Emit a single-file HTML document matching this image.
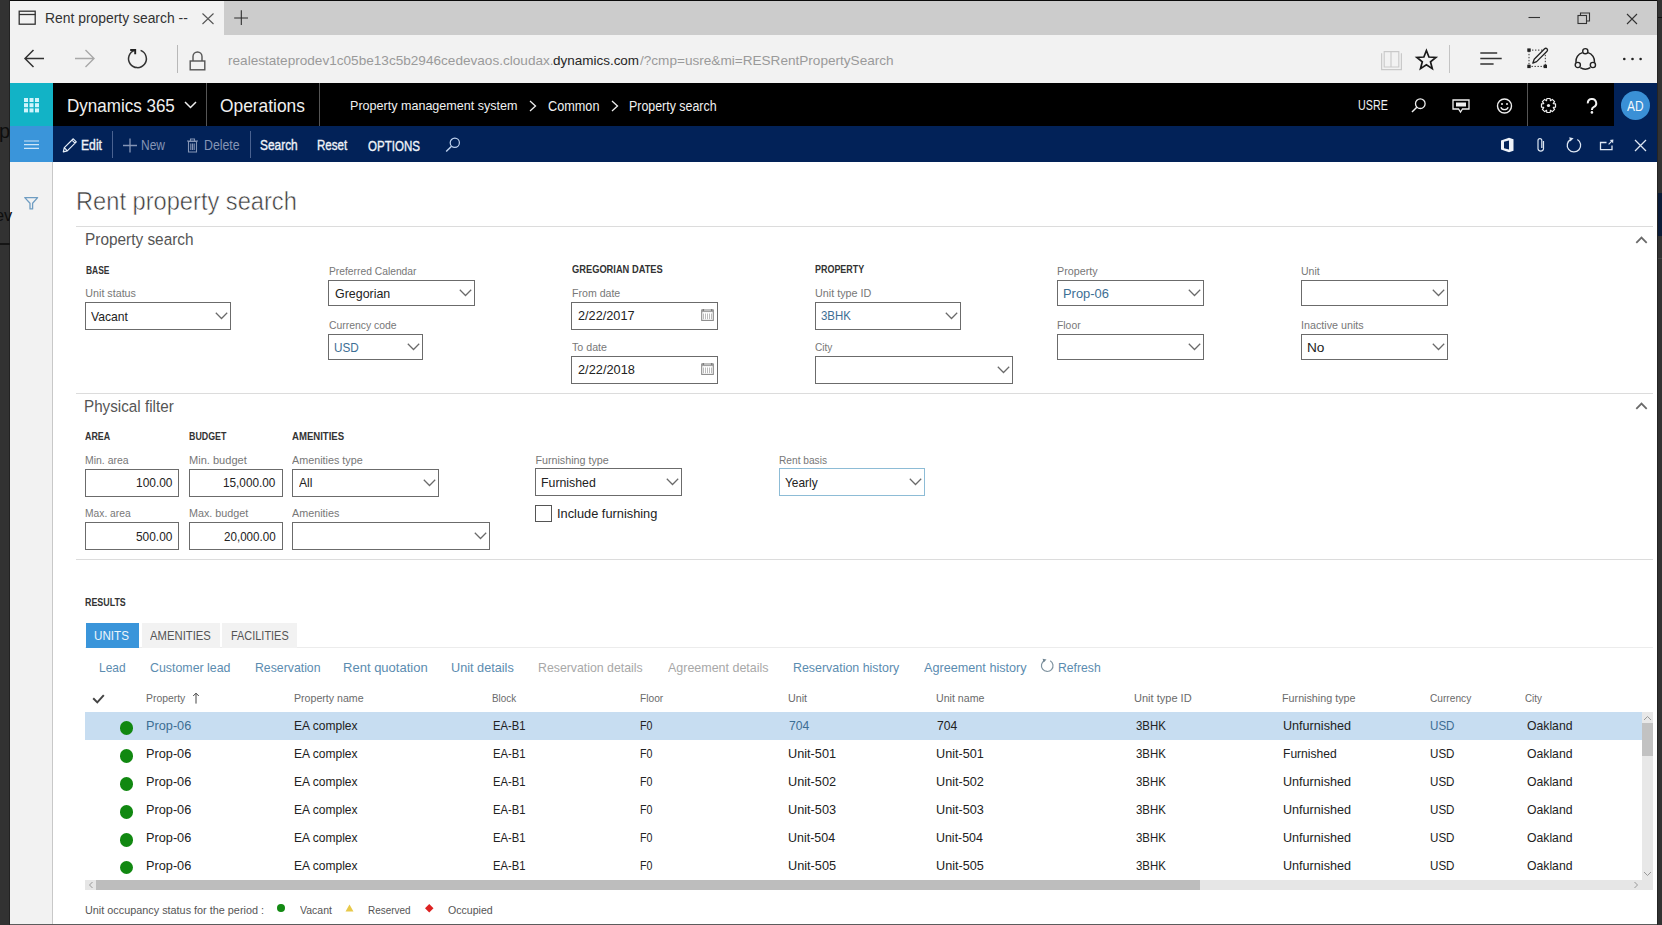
<!DOCTYPE html>
<html><head><meta charset="utf-8"><style>
html,body{margin:0;padding:0;width:1662px;height:925px;overflow:hidden;background:#fff;position:relative;font-family:'Liberation Sans', sans-serif;}
.t{position:absolute;white-space:nowrap;line-height:1;font-family:'Liberation Sans', sans-serif;}
svg{position:absolute;overflow:visible}
</style></head><body>
<div style="position:absolute;left:0px;top:0px;width:1662px;height:925px;background:#323232"></div>
<div style="position:absolute;left:9px;top:0px;width:1px;height:925px;background:#222"></div>
<div style="position:absolute;left:1657px;top:0px;width:1px;height:925px;background:#242424"></div>
<div style="position:absolute;left:10px;top:0px;width:1647px;height:1px;background:#0a0a0a"></div>
<div style="position:absolute;left:1658px;top:17px;width:4px;height:1px;background:#111"></div>
<div style="position:absolute;left:10px;top:1px;width:1647px;height:34px;background:#cccccc"></div>
<div style="position:absolute;left:10px;top:1px;width:214px;height:34px;background:#f2f2f2"></div>
<div style="position:absolute;left:10px;top:35px;width:1647px;height:48px;background:#f2f2f2"></div>
<div style="position:absolute;left:10px;top:83px;width:1647px;height:43px;background:#000"></div>
<div style="position:absolute;left:10px;top:83px;width:43px;height:43px;background:#12b3c6"></div>
<div style="position:absolute;left:1614px;top:83px;width:43px;height:43px;background:#022258"></div>
<div style="position:absolute;left:10px;top:126px;width:1647px;height:36px;background:#022258"></div>
<div style="position:absolute;left:10px;top:126px;width:43px;height:36px;background:#3a95da"></div>
<div style="position:absolute;left:10px;top:162px;width:1647px;height:762px;background:#fff"></div>
<div style="position:absolute;left:10px;top:924px;width:1647px;height:1px;background:#5c5c5c"></div>
<div style="position:absolute;left:10px;top:162px;width:42px;height:762px;background:#f2f2f2"></div>
<div style="position:absolute;left:52px;top:162px;width:1px;height:762px;background:#c8c8c8"></div>
<div style="position:absolute;left:0px;top:243px;width:10px;height:2px;background:#151515"></div>
<div style="position:absolute;left:1658px;top:193px;width:4px;height:43px;background:#0b1c38"></div>
<div style="position:absolute;left:1658px;top:258px;width:4px;height:1px;background:#444"></div>
<svg style="left:18px;top:10px" width="19" height="16" viewBox="0 0 19 16"><rect x="1.2" y="1.2" width="16" height="13" fill="none" stroke="#333" stroke-width="1.3"/><line x1="1" y1="4.5" x2="17.5" y2="4.5" fill="none" stroke="#333" stroke-width="1.3"/></svg>
<svg style="left:201px;top:12px" width="14" height="13" viewBox="0 0 14 13"><path d="M1.5 1.5L12.5 12M12.5 1.5L1.5 12" fill="none" stroke="#555" stroke-width="1.1"/></svg>
<svg style="left:233px;top:9px" width="16" height="17" viewBox="0 0 16 17"><path d="M8.3 1.2V16M1.2 9H15" fill="none" stroke="#2a2a2a" stroke-width="1.05"/></svg>
<svg style="left:23px;top:48px" width="22" height="21" viewBox="0 0 22 21"><path d="M21 10.5H2M10.5 2L2 10.5L10.5 19" fill="none" stroke="#333" stroke-width="1.5"/></svg>
<svg style="left:74px;top:48px" width="22" height="21" viewBox="0 0 22 21"><path d="M1 10.5H20M11.5 2L20 10.5L11.5 19" fill="none" stroke="#a8a8a8" stroke-width="1.4"/></svg>
<svg style="left:126px;top:47px" width="24" height="24" viewBox="0 0 24 24"><path d="M14.6 3.4A8.9 8.9 0 1 1 8.9 3.2" fill="none" stroke="#333" stroke-width="1.5"/><path d="M4.2 3H9.2V7.2" fill="none" stroke="#222" stroke-width="1.9"/></svg>
<div style="position:absolute;left:177px;top:45px;width:1px;height:28px;background:#b8b8b8"></div>
<svg style="left:189px;top:49px" width="17" height="22" viewBox="0 0 17 22"><path d="M4 12V7.5A4.5 4.5 0 0 1 13 7.5V12" fill="none" stroke="#555" stroke-width="1.4"/><rect x="1.2" y="12" width="14.6" height="8.8" fill="none" stroke="#555" stroke-width="1.4"/></svg>
<svg style="left:1528px;top:16px" width="13" height="3" viewBox="0 0 13 3"><line x1="0.5" y1="1.5" x2="12" y2="1.5" stroke="#333" stroke-width="1.1"/></svg>
<svg style="left:1577px;top:12px" width="14" height="12" viewBox="0 0 14 12"><rect x="1" y="3.5" width="8.5" height="8" fill="none" stroke="#333" stroke-width="1.1"/><path d="M3.5 3.5V1H12.5V9H9.5" fill="none" stroke="#333" stroke-width="1.1"/></svg>
<svg style="left:1626px;top:13px" width="12" height="12" viewBox="0 0 12 12"><path d="M1 1L11 11M11 1L1 11" fill="none" stroke="#333" stroke-width="1.1"/></svg>
<svg style="left:1380px;top:50px" width="23" height="21" viewBox="0 0 23 21"><path d="M1.6 3.2V19.6H21.4V3.2" fill="none" stroke="#c9c9c9" stroke-width="1.2"/><path d="M4.2 1.6H11V17H4.2ZM11 1.6H18.8V17H11Z" fill="none" stroke="#c9c9c9" stroke-width="1.1"/></svg>
<svg style="left:1414.5px;top:48px" width="23" height="23" viewBox="0 0 23 23"><path d="M11.40 2.50 L13.93 9.02 L20.91 9.41 L15.49 13.83 L17.28 20.59 L11.40 16.80 L5.52 20.59 L7.31 13.83 L1.89 9.41 L8.87 9.02Z" fill="none" stroke="#1a1a1a" stroke-width="1.7" stroke-linejoin="miter" stroke-miterlimit="3"/></svg>
<div style="position:absolute;left:1449px;top:45px;width:1px;height:28px;background:#c4c4c4"></div>
<svg style="left:1479px;top:51px" width="24" height="15" viewBox="0 0 24 15"><path d="M1.3 2H18.2M1.3 7.5H22.7M1.3 12.9H14.6" stroke="#333" stroke-width="1.5"/></svg>
<svg style="left:1526px;top:47px" width="23" height="23" viewBox="0 0 23 23"><path d="M3 3.1H19.3V19.4H3Z" fill="none" stroke="#333" stroke-width="1" stroke-dasharray="1.4 1.6"/><rect x="1.3" y="1.4" width="3.4" height="3.4" fill="#222"/><rect x="1.3" y="17.7" width="3.4" height="3.4" fill="#222"/><rect x="17.6" y="17.7" width="3.4" height="3.4" fill="#222"/><path d="M6.8 16.2L8.2 12.2L18.6 1.8A1.4 1.4 0 0 1 21 4.2L10.6 14.6Z" fill="#f2f2f2" stroke="#222" stroke-width="1.3" stroke-linejoin="round"/></svg>
<svg style="left:1573px;top:47px" width="24" height="23" viewBox="0 0 24 23"><path d="M9.4 5.6A9.4 9.4 0 0 0 2.9 15.6M7.3 20.6A9.4 9.4 0 0 0 17.3 20.6M21.5 15.6A9.4 9.4 0 0 0 15 5.6" fill="none" stroke="#222" stroke-width="1.5"/><circle cx="12.3" cy="4.2" r="2.6" fill="#f2f2f2" stroke="#222" stroke-width="1.4"/><circle cx="4.8" cy="18" r="2.6" fill="#f2f2f2" stroke="#222" stroke-width="1.4"/><circle cx="19.9" cy="18" r="2.6" fill="#f2f2f2" stroke="#222" stroke-width="1.4"/></svg>
<svg style="left:1621px;top:57px" width="23" height="4" viewBox="0 0 23 4"><circle cx="3.3" cy="2" r="1.3" fill="#222"/><circle cx="11.5" cy="2" r="1.3" fill="#222"/><circle cx="19.6" cy="2" r="1.3" fill="#222"/></svg>
<svg style="left:24px;top:98px" width="16" height="15" viewBox="0 0 16 15"><rect x="0.0" y="0.0" width="4" height="4" fill="#d0f4fb"/><rect x="5.5" y="0.0" width="4" height="4" fill="#d0f4fb"/><rect x="11.0" y="0.0" width="4" height="4" fill="#d0f4fb"/><rect x="0.0" y="5.2" width="4" height="4" fill="#d0f4fb"/><rect x="5.5" y="5.2" width="4" height="4" fill="#d0f4fb"/><rect x="11.0" y="5.2" width="4" height="4" fill="#d0f4fb"/><rect x="0.0" y="10.4" width="4" height="4" fill="#d0f4fb"/><rect x="5.5" y="10.4" width="4" height="4" fill="#d0f4fb"/><rect x="11.0" y="10.4" width="4" height="4" fill="#d0f4fb"/></svg>
<svg style="left:184px;top:101px" width="13" height="8" viewBox="0 0 13 8"><path d="M1 1L6.5 6.5L12 1" fill="none" stroke="#eee" stroke-width="1.5"/></svg>
<div style="position:absolute;left:206px;top:83px;width:1px;height:43px;background:#555"></div>
<div style="position:absolute;left:319px;top:83px;width:1px;height:43px;background:#555"></div>
<svg style="left:529px;top:100px" width="8" height="12" viewBox="0 0 8 12"><path d="M1 1L6.5 6L1 11" fill="none" stroke="#eee" stroke-width="1.3"/></svg>
<svg style="left:611px;top:100px" width="8" height="12" viewBox="0 0 8 12"><path d="M1 1L6.5 6L1 11" fill="none" stroke="#eee" stroke-width="1.3"/></svg>
<svg style="left:1411px;top:98px" width="15" height="15" viewBox="0 0 15 15"><circle cx="9.3" cy="5.7" r="4.8" fill="none" stroke="#eee" stroke-width="1.3"/><path d="M5.8 9.2L1 14" stroke="#eee" stroke-width="1.5"/></svg>
<svg style="left:1452px;top:99px" width="18" height="14" viewBox="0 0 18 14"><path d="M1 1H17V10H10.5L8.5 13L6.5 10H1Z" fill="none" stroke="#eee" stroke-width="1.3"/><rect x="4" y="3.5" width="10" height="4" fill="#eee"/></svg>
<svg style="left:1496px;top:98px" width="17" height="16" viewBox="0 0 17 16"><circle cx="8.5" cy="8" r="7" fill="none" stroke="#eee" stroke-width="1.4"/><circle cx="6" cy="6" r="1" fill="#eee"/><circle cx="11" cy="6" r="1" fill="#eee"/><path d="M4.8 9.2A4 4 0 0 0 12.2 9.2" fill="none" stroke="#eee" stroke-width="1.3"/></svg>
<div style="position:absolute;left:1527px;top:83px;width:1px;height:43px;background:#555"></div>
<svg style="left:1541px;top:98px" width="15" height="15" viewBox="0 0 15 15"><path d="M14.52 5.88 L14.52 9.12 L12.32 9.45 L12.29 9.53 L13.61 11.32 L11.32 13.61 L9.53 12.29 L9.45 12.32 L9.12 14.52 L5.88 14.52 L5.55 12.32 L5.47 12.29 L3.68 13.61 L1.39 11.32 L2.71 9.53 L2.68 9.45 L0.48 9.12 L0.48 5.88 L2.68 5.55 L2.71 5.47 L1.39 3.68 L3.68 1.39 L5.47 2.71 L5.55 2.68 L5.88 0.48 L9.12 0.48 L9.45 2.68 L9.53 2.71 L11.32 1.39 L13.61 3.68 L12.29 5.47 L12.32 5.55Z" fill="none" stroke="#eee" stroke-width="1.2" stroke-linejoin="round"/><circle cx="7.5" cy="7.5" r="1.6" fill="#eee"/></svg>
<svg style="left:1586px;top:99px" width="12" height="15" viewBox="0 0 12 15"><path d="M1.8 4.4A4.2 4.2 0 1 1 7.6 8.1C6.2 8.9 5.9 9.6 5.9 11" fill="none" stroke="#f2f2f2" stroke-width="2"/><circle cx="5.9" cy="13.4" r="1.3" fill="#f2f2f2"/></svg>
<div style="position:absolute;left:1621px;top:90.5px;width:29px;height:29px;background:#3a90d6;border-radius:50%"></div>
<svg style="left:24px;top:140px" width="16" height="10" viewBox="0 0 16 10"><path d="M0 1H15M0 4.7H15M0 8.4H15" stroke="#cfe6f8" stroke-width="1.2"/></svg>
<svg style="left:62px;top:138px" width="16" height="15" viewBox="0 0 16 15"><path d="M1.3 13.8L2.3 9.6L11.3 0.8L14.3 3.8L5.3 12.8Z M10 2.2L13 5.2 M2.3 9.6L5.3 12.8" fill="none" stroke="#e6eef8" stroke-width="1.2" stroke-linejoin="round"/></svg>
<div style="position:absolute;left:112px;top:131px;width:1px;height:27px;background:#4a6290"></div>
<svg style="left:123px;top:138px" width="14" height="15" viewBox="0 0 14 15"><path d="M7 0.5V14.5M0 7.5H14" stroke="#8595b5" stroke-width="1.3"/></svg>
<svg style="left:187px;top:138px" width="11" height="15" viewBox="0 0 11 15"><path d="M1.5 3.5H9.5V14H1.5Z M0 3H11 M3.5 3V1H7.5V3 M3.8 5.5V12 M5.5 5.5V12 M7.2 5.5V12" fill="none" stroke="#8595b5" stroke-width="1.1"/></svg>
<div style="position:absolute;left:250px;top:131px;width:1px;height:27px;background:#4a6290"></div>
<svg style="left:445px;top:137px" width="16" height="16" viewBox="0 0 16 16"><circle cx="9.8" cy="5.8" r="4.6" fill="none" stroke="#bfd2ee" stroke-width="1.2"/><path d="M6.5 9.2L1.2 14.6" stroke="#bfd2ee" stroke-width="1.4"/></svg>
<svg style="left:1500px;top:137px" width="15" height="16" viewBox="0 0 15 16"><path d="M1 3.5L9 0.8L13.5 2.2V13.8L9 15.2L1 12.5ZM9 0.8V15.2L1 12.5" fill="#eef2f8"/><path d="M4 4.8L9 3.5V12.5L4 11.3Z" fill="#022258"/></svg>
<svg style="left:1536px;top:137px" width="10" height="16" viewBox="0 0 10 16"><path d="M7.5 4V11.8A2.8 2.8 0 0 1 2 11.8V3.6A1.9 1.9 0 0 1 5.8 3.6V11" fill="none" stroke="#dde6f2" stroke-width="1.2"/></svg>
<svg style="left:1566px;top:136px" width="16" height="17" viewBox="0 0 16 17"><path d="M11.35 3.5A6.7 6.7 0 1 1 4.9 3.3" fill="none" stroke="#dde6f2" stroke-width="1.3"/><path d="M3.2 1.2L7.6 2.2L4.3 5.6Z" fill="#dde6f2"/></svg>
<svg style="left:1599px;top:139px" width="16" height="12" viewBox="0 0 16 12"><path d="M7.5 3.5H1.5V10.7H13V6.5" fill="none" stroke="#dde6f2" stroke-width="1.3"/><path d="M9.6 5.4L12.8 2.2" stroke="#dde6f2" stroke-width="1.2"/><path d="M10.8 0.9L14.4 0.6L14.1 4.2Z" fill="#dde6f2"/></svg>
<svg style="left:1634px;top:139px" width="13" height="13" viewBox="0 0 13 13"><path d="M1 1L12 12M12 1L1 12" fill="none" stroke="#dde6f2" stroke-width="1.3"/></svg>
<svg style="left:23px;top:196px" width="17" height="15" viewBox="0 0 17 15"><path d="M1.8 1.6H14.6L9.6 7.3V12.9H7V7.3Z" fill="none" stroke="#6f9dc2" stroke-width="1.3" stroke-linejoin="round"/></svg>
<div style="position:absolute;left:76px;top:226px;width:1577px;height:1px;background:#dcdcdc"></div>
<div style="position:absolute;left:76px;top:393px;width:1577px;height:1px;background:#dcdcdc"></div>
<div style="position:absolute;left:76px;top:559px;width:1577px;height:1px;background:#dcdcdc"></div>
<svg style="left:1634.5px;top:236px" width="13" height="9" viewBox="0 0 13 9"><path d="M1.3 6.8L6.5 1.6L11.7 6.8" fill="none" stroke="#6a6a6a" stroke-width="1.8"/></svg>
<svg style="left:1634.5px;top:402px" width="13" height="9" viewBox="0 0 13 9"><path d="M1.3 6.8L6.5 1.6L11.7 6.8" fill="none" stroke="#6a6a6a" stroke-width="1.8"/></svg>
<div style="position:absolute;left:85px;top:302px;width:146px;height:27.6px;box-sizing:border-box;border:1px solid #6b6b6b;background:#fff"></div>
<svg style="left:214.5px;top:312.0px" width="13" height="8" viewBox="0 0 13 8"><path d="M0.8 0.8L6.5 6.5L12.2 0.8" fill="none" stroke="#6a6a6a" stroke-width="1.25"/></svg>
<div style="position:absolute;left:328px;top:280px;width:147px;height:26px;box-sizing:border-box;border:1px solid #6b6b6b;background:#fff"></div>
<svg style="left:458.5px;top:289.2px" width="13" height="8" viewBox="0 0 13 8"><path d="M0.8 0.8L6.5 6.5L12.2 0.8" fill="none" stroke="#6a6a6a" stroke-width="1.25"/></svg>
<div style="position:absolute;left:328px;top:334px;width:95px;height:26px;box-sizing:border-box;border:1px solid #6b6b6b;background:#fff"></div>
<svg style="left:406.5px;top:343.2px" width="13" height="8" viewBox="0 0 13 8"><path d="M0.8 0.8L6.5 6.5L12.2 0.8" fill="none" stroke="#6a6a6a" stroke-width="1.25"/></svg>
<div style="position:absolute;left:571px;top:302px;width:147px;height:27.6px;box-sizing:border-box;border:1px solid #6b6b6b;background:#fff"></div>
<div style="position:absolute;left:571px;top:356px;width:147px;height:27.6px;box-sizing:border-box;border:1px solid #6b6b6b;background:#fff"></div>
<svg style="left:701px;top:309px" width="14" height="13" viewBox="0 0 14 13"><rect x="0.7" y="1" width="11.6" height="10.4" fill="none" stroke="#8a8a8a" stroke-width="1.1"/><path d="M0.7 2.6H12.3" stroke="#999" stroke-width="1"/><circle cx="2.3" cy="1" r="0.9" fill="#777"/><circle cx="10.7" cy="1" r="0.9" fill="#777"/><path d="M2.5 4.5V10.2M4.5 4.5V10.2M6.5 4.5V10.2M8.5 4.5V10.2M10.5 4.5V10.2" stroke="#aaa" stroke-width="0.8"/></svg>
<svg style="left:701px;top:363px" width="14" height="13" viewBox="0 0 14 13"><rect x="0.7" y="1" width="11.6" height="10.4" fill="none" stroke="#8a8a8a" stroke-width="1.1"/><path d="M0.7 2.6H12.3" stroke="#999" stroke-width="1"/><circle cx="2.3" cy="1" r="0.9" fill="#777"/><circle cx="10.7" cy="1" r="0.9" fill="#777"/><path d="M2.5 4.5V10.2M4.5 4.5V10.2M6.5 4.5V10.2M8.5 4.5V10.2M10.5 4.5V10.2" stroke="#aaa" stroke-width="0.8"/></svg>
<div style="position:absolute;left:815px;top:302px;width:146px;height:27.6px;box-sizing:border-box;border:1px solid #6b6b6b;background:#fff"></div>
<svg style="left:944.5px;top:312.0px" width="13" height="8" viewBox="0 0 13 8"><path d="M0.8 0.8L6.5 6.5L12.2 0.8" fill="none" stroke="#6a6a6a" stroke-width="1.25"/></svg>
<div style="position:absolute;left:815px;top:356px;width:198px;height:27.6px;box-sizing:border-box;border:1px solid #6b6b6b;background:#fff"></div>
<svg style="left:996.5px;top:366.0px" width="13" height="8" viewBox="0 0 13 8"><path d="M0.8 0.8L6.5 6.5L12.2 0.8" fill="none" stroke="#6a6a6a" stroke-width="1.25"/></svg>
<div style="position:absolute;left:1057px;top:280px;width:147px;height:26px;box-sizing:border-box;border:1px solid #6b6b6b;background:#fff"></div>
<svg style="left:1187.5px;top:289.2px" width="13" height="8" viewBox="0 0 13 8"><path d="M0.8 0.8L6.5 6.5L12.2 0.8" fill="none" stroke="#6a6a6a" stroke-width="1.25"/></svg>
<div style="position:absolute;left:1057px;top:334px;width:147px;height:26px;box-sizing:border-box;border:1px solid #6b6b6b;background:#fff"></div>
<svg style="left:1187.5px;top:343.2px" width="13" height="8" viewBox="0 0 13 8"><path d="M0.8 0.8L6.5 6.5L12.2 0.8" fill="none" stroke="#6a6a6a" stroke-width="1.25"/></svg>
<div style="position:absolute;left:1301px;top:280px;width:147px;height:26px;box-sizing:border-box;border:1px solid #6b6b6b;background:#fff"></div>
<svg style="left:1431.5px;top:289.2px" width="13" height="8" viewBox="0 0 13 8"><path d="M0.8 0.8L6.5 6.5L12.2 0.8" fill="none" stroke="#6a6a6a" stroke-width="1.25"/></svg>
<div style="position:absolute;left:1301px;top:334px;width:147px;height:26px;box-sizing:border-box;border:1px solid #6b6b6b;background:#fff"></div>
<svg style="left:1431.5px;top:343.2px" width="13" height="8" viewBox="0 0 13 8"><path d="M0.8 0.8L6.5 6.5L12.2 0.8" fill="none" stroke="#6a6a6a" stroke-width="1.25"/></svg>
<div style="position:absolute;left:85px;top:469px;width:94px;height:27.6px;box-sizing:border-box;border:1px solid #6b6b6b;background:#fff"></div>
<div style="position:absolute;left:189px;top:469px;width:94px;height:27.6px;box-sizing:border-box;border:1px solid #6b6b6b;background:#fff"></div>
<div style="position:absolute;left:292px;top:469px;width:147px;height:27.6px;box-sizing:border-box;border:1px solid #6b6b6b;background:#fff"></div>
<svg style="left:422.5px;top:479.0px" width="13" height="8" viewBox="0 0 13 8"><path d="M0.8 0.8L6.5 6.5L12.2 0.8" fill="none" stroke="#6a6a6a" stroke-width="1.25"/></svg>
<div style="position:absolute;left:85px;top:522px;width:94px;height:27.6px;box-sizing:border-box;border:1px solid #6b6b6b;background:#fff"></div>
<div style="position:absolute;left:189px;top:522px;width:94px;height:27.6px;box-sizing:border-box;border:1px solid #6b6b6b;background:#fff"></div>
<div style="position:absolute;left:292px;top:522px;width:198px;height:27.6px;box-sizing:border-box;border:1px solid #6b6b6b;background:#fff"></div>
<svg style="left:473.5px;top:532.0px" width="13" height="8" viewBox="0 0 13 8"><path d="M0.8 0.8L6.5 6.5L12.2 0.8" fill="none" stroke="#6a6a6a" stroke-width="1.25"/></svg>
<div style="position:absolute;left:535px;top:468px;width:147px;height:28px;box-sizing:border-box;border:1px solid #6b6b6b;background:#fff"></div>
<svg style="left:665.5px;top:478.2px" width="13" height="8" viewBox="0 0 13 8"><path d="M0.8 0.8L6.5 6.5L12.2 0.8" fill="none" stroke="#6a6a6a" stroke-width="1.25"/></svg>
<div style="position:absolute;left:535px;top:505px;width:17px;height:17px;box-sizing:border-box;border:1px solid #555;background:#fff"></div>
<div style="position:absolute;left:779px;top:468px;width:146px;height:28px;box-sizing:border-box;border:1px solid #8dbcd6;background:#fff"></div>
<svg style="left:908.5px;top:478.2px" width="13" height="8" viewBox="0 0 13 8"><path d="M0.8 0.8L6.5 6.5L12.2 0.8" fill="none" stroke="#6a6a6a" stroke-width="1.25"/></svg>
<div style="position:absolute;left:85px;top:647px;width:1568px;height:1px;background:#ececec"></div>
<div style="position:absolute;left:85.5px;top:622.5px;width:53.3px;height:25.5px;background:#3a95da"></div>
<div style="position:absolute;left:141.8px;top:622.5px;width:78px;height:25.5px;background:#f2f2f2"></div>
<div style="position:absolute;left:222.3px;top:622.5px;width:75px;height:25.5px;background:#f2f2f2"></div>
<svg style="left:1040px;top:658px" width="15" height="16" viewBox="0 0 15 16"><path d="M10.2 2.7A5.8 5.8 0 1 1 4.6 2.5" fill="none" stroke="#7e929f" stroke-width="1.2"/><path d="M2.6 0.8L6.5 1.6L3.6 4.6Z" fill="#6f8592"/></svg>
<svg style="left:92px;top:694px" width="14" height="11" viewBox="0 0 14 11"><path d="M1.2 4.2L5.3 8.4L11.8 1.2" fill="none" stroke="#444" stroke-width="2"/></svg>
<svg style="left:192px;top:692px" width="8" height="13" viewBox="0 0 8 13"><path d="M4 11.6V1.2M1.2 4L4 1.2L6.8 4" fill="none" stroke="#444" stroke-width="1"/></svg>
<div style="position:absolute;left:85px;top:712px;width:1557px;height:28px;background:#c7ddf1"></div>
<div style="position:absolute;left:119.6px;top:721.20px;width:13.5px;height:13.5px;border-radius:50%;background:#118811"></div>
<div style="position:absolute;left:119.6px;top:749.15px;width:13.5px;height:13.5px;border-radius:50%;background:#118811"></div>
<div style="position:absolute;left:119.6px;top:777.10px;width:13.5px;height:13.5px;border-radius:50%;background:#118811"></div>
<div style="position:absolute;left:119.6px;top:805.05px;width:13.5px;height:13.5px;border-radius:50%;background:#118811"></div>
<div style="position:absolute;left:119.6px;top:833.00px;width:13.5px;height:13.5px;border-radius:50%;background:#118811"></div>
<div style="position:absolute;left:119.6px;top:860.95px;width:13.5px;height:13.5px;border-radius:50%;background:#118811"></div>
<div style="position:absolute;left:1641.6px;top:712px;width:11.2px;height:168px;background:#e8e8e8"></div>
<div style="position:absolute;left:1642px;top:723px;width:10.5px;height:33px;background:#c2c2c2"></div>
<svg style="left:1643px;top:715px" width="9" height="6" viewBox="0 0 9 6"><path d="M1 5L4.5 1.5L8 5" fill="none" stroke="#999" stroke-width="1"/></svg>
<svg style="left:1643px;top:871px" width="9" height="6" viewBox="0 0 9 6"><path d="M1 1L4.5 4.5L8 1" fill="none" stroke="#999" stroke-width="1"/></svg>
<div style="position:absolute;left:85px;top:880px;width:1568px;height:10px;background:#e6e6e6"></div>
<div style="position:absolute;left:96px;top:880px;width:1104px;height:10px;background:#bdbdbd"></div>
<svg style="left:88px;top:881px" width="6" height="8" viewBox="0 0 6 8"><path d="M4.5 1L1.5 4L4.5 7" fill="none" stroke="#999" stroke-width="1"/></svg>
<svg style="left:1633px;top:881px" width="6" height="8" viewBox="0 0 6 8"><path d="M1.5 1L4.5 4L1.5 7" fill="none" stroke="#999" stroke-width="1"/></svg>
<div style="position:absolute;left:277.2px;top:904.2px;width:7.8px;height:7.8px;border-radius:50%;background:#138a13"></div>
<svg style="left:345px;top:904px" width="9" height="8" viewBox="0 0 9 8"><path d="M4.5 0.5L8.5 7.5H0.5Z" fill="#e8c94a"/></svg>
<svg style="left:425px;top:904px" width="8.5" height="8.5" viewBox="0 0 8.5 8.5"><path d="M4.25 0L8.5 4.25L4.25 8.5L0 4.25Z" fill="#d22"/></svg>
<div id="t0" class="t" style="left:-1.00px;top:120.60px;font-size:20.00px;color:#0e0e0e;">p</div>
<div id="t1" class="t" style="left:-5.00px;top:206.78px;font-size:16.38px;color:#0e0e0e;">ev</div>
<div id="t2" class="t" style="left:44.99px;top:12.00px;font-size:13.77px;color:#333;transform:scaleX(1.0086);transform-origin:0 0;">Rent property search --</div>
<div id="t3" class="t" style="left:227.50px;top:53.69px;font-size:13.19px;color:#9a9a9a;transform:scaleX(1.0303);transform-origin:0 0;">realestateprodev1c05be13c5b2946cedevaos.cloudax.</div>
<div id="t4" class="t" style="left:553.00px;top:53.69px;font-size:13.19px;color:#262626;transform:scaleX(1.0213);transform-origin:0 0;">dynamics.com</div>
<div id="t5" class="t" style="left:640.00px;top:53.69px;font-size:13.19px;color:#9a9a9a;transform:scaleX(1.0299);transform-origin:0 0;">/?cmp=usre&amp;mi=RESRentPropertySearch</div>
<div id="t6" class="t" style="left:66.60px;top:96.59px;font-size:18.84px;color:#f0f0f0;transform:scaleX(0.9039);transform-origin:0 0;">Dynamics 365</div>
<div id="t7" class="t" style="left:220.00px;top:96.59px;font-size:18.84px;color:#f0f0f0;transform:scaleX(0.9216);transform-origin:0 0;">Operations</div>
<div id="t8" class="t" style="left:349.67px;top:98.84px;font-size:13.48px;color:#f0f0f0;transform:scaleX(0.9325);transform-origin:0 0;">Property management system</div>
<div id="t9" class="t" style="left:548.00px;top:98.75px;font-size:14.06px;color:#f0f0f0;transform:scaleX(0.9026);transform-origin:0 0;">Common</div>
<div id="t10" class="t" style="left:629.12px;top:98.75px;font-size:14.06px;color:#f0f0f0;transform:scaleX(0.8835);transform-origin:0 0;">Property search</div>
<div id="t11" class="t" style="left:1357.83px;top:99.07px;font-size:13.91px;color:#f0f0f0;transform:scaleX(0.7709);transform-origin:0 0;">USRE</div>
<div id="t12" class="t" style="left:1627.10px;top:99.67px;font-size:13.91px;color:#f4f8fc;transform:scaleX(0.8560);transform-origin:0 0;">AD</div>
<div id="t13" class="t" style="left:80.83px;top:137.75px;font-size:14.06px;color:#eef2f8;transform:scaleX(0.8669);transform-origin:0 0;-webkit-text-stroke:0.35px #eef2f8;">Edit</div>
<div id="t14" class="t" style="left:141.05px;top:137.75px;font-size:14.06px;color:#8595b5;transform:scaleX(0.8513);transform-origin:0 0;">New</div>
<div id="t15" class="t" style="left:203.92px;top:137.75px;font-size:14.06px;color:#8595b5;transform:scaleX(0.8771);transform-origin:0 0;">Delete</div>
<div id="t16" class="t" style="left:260.30px;top:137.75px;font-size:14.06px;color:#eef2f8;transform:scaleX(0.8468);transform-origin:0 0;-webkit-text-stroke:0.35px #eef2f8;">Search</div>
<div id="t17" class="t" style="left:317.18px;top:137.75px;font-size:14.06px;color:#eef2f8;transform:scaleX(0.8242);transform-origin:0 0;-webkit-text-stroke:0.35px #eef2f8;">Reset</div>
<div id="t18" class="t" style="left:367.70px;top:139.77px;font-size:13.91px;color:#eef2f8;transform:scaleX(0.8297);transform-origin:0 0;-webkit-text-stroke:0.35px #eef2f8;">OPTIONS</div>
<div id="t19" class="t" style="left:75.81px;top:187.88px;font-size:26.38px;color:#3c3c3c;transform:scaleX(0.8966);transform-origin:0 0;-webkit-text-stroke:0.55px #fff;">Rent property search</div>
<div id="t20" class="t" style="left:84.87px;top:232.46px;font-size:16.52px;color:#555;transform:scaleX(0.9316);transform-origin:0 0;">Property search</div>
<div id="t21" class="t" style="left:84.49px;top:399.33px;font-size:16.67px;color:#555;transform:scaleX(0.9142);transform-origin:0 0;">Physical filter</div>
<div id="t22" class="t" style="left:85.60px;top:264.58px;font-size:10.72px;color:#333;font-weight:bold;transform:scaleX(0.7863);transform-origin:0 0;">BASE</div>
<div id="t23" class="t" style="left:85.30px;top:287.58px;font-size:10.72px;color:#777;">Unit status</div>
<div id="t24" class="t" style="left:91.40px;top:309.77px;font-size:13.33px;color:#222;transform:scaleX(0.9117);transform-origin:0 0;">Vacant</div>
<div id="t25" class="t" style="left:328.70px;top:265.58px;font-size:10.72px;color:#777;transform:scaleX(0.9597);transform-origin:0 0;">Preferred Calendar</div>
<div id="t26" class="t" style="left:334.50px;top:287.07px;font-size:13.33px;color:#222;transform:scaleX(0.9328);transform-origin:0 0;">Gregorian</div>
<div id="t27" class="t" style="left:328.70px;top:319.88px;font-size:10.72px;color:#777;transform:scaleX(0.9707);transform-origin:0 0;">Currency code</div>
<div id="t28" class="t" style="left:333.92px;top:341.27px;font-size:13.33px;color:#3d6e94;transform:scaleX(0.8825);transform-origin:0 0;">USD</div>
<div id="t29" class="t" style="left:571.70px;top:264.18px;font-size:10.72px;color:#333;font-weight:bold;transform:scaleX(0.8673);transform-origin:0 0;">GREGORIAN DATES</div>
<div id="t30" class="t" style="left:571.70px;top:287.98px;font-size:10.72px;color:#777;transform:scaleX(0.9880);transform-origin:0 0;">From date</div>
<div id="t31" class="t" style="left:577.80px;top:308.97px;font-size:13.33px;color:#222;transform:scaleX(0.9545);transform-origin:0 0;">2/22/2017</div>
<div id="t32" class="t" style="left:571.70px;top:341.68px;font-size:10.72px;color:#777;transform:scaleX(0.9943);transform-origin:0 0;">To date</div>
<div id="t33" class="t" style="left:577.80px;top:363.17px;font-size:13.33px;color:#222;transform:scaleX(0.9596);transform-origin:0 0;">2/22/2018</div>
<div id="t34" class="t" style="left:814.70px;top:264.18px;font-size:10.72px;color:#333;font-weight:bold;transform:scaleX(0.8348);transform-origin:0 0;">PROPERTY</div>
<div id="t35" class="t" style="left:814.70px;top:287.98px;font-size:10.72px;color:#777;transform:scaleX(1.0061);transform-origin:0 0;">Unit type ID</div>
<div id="t36" class="t" style="left:820.80px;top:309.37px;font-size:13.33px;color:#3d6e94;transform:scaleX(0.8589);transform-origin:0 0;">3BHK</div>
<div id="t37" class="t" style="left:814.70px;top:341.68px;font-size:10.72px;color:#777;transform:scaleX(0.9424);transform-origin:0 0;">City</div>
<div id="t38" class="t" style="left:1057.40px;top:265.58px;font-size:10.72px;color:#777;transform:scaleX(1.0036);transform-origin:0 0;">Property</div>
<div id="t39" class="t" style="left:1063.03px;top:287.17px;font-size:13.33px;color:#3d6e94;transform:scaleX(0.9673);transform-origin:0 0;">Prop-06</div>
<div id="t40" class="t" style="left:1057.40px;top:319.88px;font-size:10.72px;color:#777;transform:scaleX(0.9657);transform-origin:0 0;">Floor</div>
<div id="t41" class="t" style="left:1301.10px;top:265.58px;font-size:10.72px;color:#777;transform:scaleX(0.9799);transform-origin:0 0;">Unit</div>
<div id="t42" class="t" style="left:1301.10px;top:319.88px;font-size:10.72px;color:#777;transform:scaleX(1.0016);transform-origin:0 0;">Inactive units</div>
<div id="t43" class="t" style="left:1306.68px;top:341.27px;font-size:13.33px;color:#222;transform:scaleX(1.0240);transform-origin:0 0;">No</div>
<div id="t44" class="t" style="left:85.10px;top:430.68px;font-size:10.72px;color:#333;font-weight:bold;transform:scaleX(0.8260);transform-origin:0 0;">AREA</div>
<div id="t45" class="t" style="left:188.90px;top:430.68px;font-size:10.72px;color:#333;font-weight:bold;transform:scaleX(0.8248);transform-origin:0 0;">BUDGET</div>
<div id="t46" class="t" style="left:292.30px;top:430.68px;font-size:10.72px;color:#333;font-weight:bold;transform:scaleX(0.8933);transform-origin:0 0;">AMENITIES</div>
<div id="t47" class="t" style="left:85.30px;top:454.58px;font-size:10.72px;color:#777;transform:scaleX(0.9750);transform-origin:0 0;">Min. area</div>
<div id="t48" class="t" style="left:136.01px;top:476.07px;font-size:13.33px;color:#222;transform:scaleX(0.8945);transform-origin:0 0;">100.00</div>
<div id="t49" class="t" style="left:188.90px;top:454.58px;font-size:10.72px;color:#777;transform:scaleX(1.0315);transform-origin:0 0;">Min. budget</div>
<div id="t50" class="t" style="left:223.42px;top:476.07px;font-size:13.33px;color:#222;transform:scaleX(0.8828);transform-origin:0 0;">15,000.00</div>
<div id="t51" class="t" style="left:292.30px;top:454.58px;font-size:10.72px;color:#777;transform:scaleX(1.0051);transform-origin:0 0;">Amenities type</div>
<div id="t52" class="t" style="left:298.60px;top:476.07px;font-size:13.33px;color:#222;transform:scaleX(0.9090);transform-origin:0 0;">All</div>
<div id="t53" class="t" style="left:85.30px;top:508.28px;font-size:10.72px;color:#777;transform:scaleX(0.9581);transform-origin:0 0;">Max. area</div>
<div id="t54" class="t" style="left:136.20px;top:529.87px;font-size:13.33px;color:#222;transform:scaleX(0.8921);transform-origin:0 0;">500.00</div>
<div id="t55" class="t" style="left:188.90px;top:508.28px;font-size:10.72px;color:#777;transform:scaleX(1.0049);transform-origin:0 0;">Max. budget</div>
<div id="t56" class="t" style="left:224.10px;top:529.87px;font-size:13.33px;color:#222;transform:scaleX(0.8713);transform-origin:0 0;">20,000.00</div>
<div id="t57" class="t" style="left:292.30px;top:508.28px;font-size:10.72px;color:#777;transform:scaleX(1.0064);transform-origin:0 0;">Amenities</div>
<div id="t58" class="t" style="left:535.40px;top:454.58px;font-size:10.72px;color:#777;">Furnishing type</div>
<div id="t59" class="t" style="left:541.08px;top:476.07px;font-size:13.33px;color:#222;transform:scaleX(0.9247);transform-origin:0 0;">Furnished</div>
<div id="t60" class="t" style="left:556.94px;top:507.27px;font-size:13.33px;color:#222;transform:scaleX(0.9606);transform-origin:0 0;">Include furnishing</div>
<div id="t61" class="t" style="left:779.00px;top:454.58px;font-size:10.72px;color:#777;transform:scaleX(0.9486);transform-origin:0 0;">Rent basis</div>
<div id="t62" class="t" style="left:784.80px;top:476.07px;font-size:13.33px;color:#222;transform:scaleX(0.8945);transform-origin:0 0;">Yearly</div>
<div id="t63" class="t" style="left:85.00px;top:597.08px;font-size:10.72px;color:#333;font-weight:bold;transform:scaleX(0.8272);transform-origin:0 0;">RESULTS</div>
<div id="t64" class="t" style="left:94.34px;top:629.42px;font-size:13.62px;color:#eef6fc;transform:scaleX(0.8553);transform-origin:0 0;">UNITS</div>
<div id="t65" class="t" style="left:149.90px;top:629.42px;font-size:13.62px;color:#555;transform:scaleX(0.8298);transform-origin:0 0;">AMENITIES</div>
<div id="t66" class="t" style="left:230.70px;top:629.42px;font-size:13.62px;color:#555;transform:scaleX(0.8026);transform-origin:0 0;">FACILITIES</div>
<div id="t67" class="t" style="left:99.10px;top:660.69px;font-size:13.19px;color:#5b8cb0;transform:scaleX(0.9043);transform-origin:0 0;">Lead</div>
<div id="t68" class="t" style="left:150.30px;top:660.69px;font-size:13.19px;color:#5b8cb0;transform:scaleX(0.9387);transform-origin:0 0;">Customer lead</div>
<div id="t69" class="t" style="left:254.77px;top:660.69px;font-size:13.19px;color:#5b8cb0;transform:scaleX(0.9310);transform-origin:0 0;">Reservation</div>
<div id="t70" class="t" style="left:343.41px;top:660.69px;font-size:13.19px;color:#5b8cb0;transform:scaleX(0.9875);transform-origin:0 0;">Rent quotation</div>
<div id="t71" class="t" style="left:451.34px;top:660.69px;font-size:13.19px;color:#5b8cb0;transform:scaleX(0.9617);transform-origin:0 0;">Unit details</div>
<div id="t72" class="t" style="left:538.37px;top:660.69px;font-size:13.19px;color:#a8a8a8;transform:scaleX(0.9333);transform-origin:0 0;">Reservation details</div>
<div id="t73" class="t" style="left:668.10px;top:660.69px;font-size:13.19px;color:#a8a8a8;transform:scaleX(0.9458);transform-origin:0 0;">Agreement details</div>
<div id="t74" class="t" style="left:793.06px;top:660.69px;font-size:13.19px;color:#5b8cb0;transform:scaleX(0.9416);transform-origin:0 0;">Reservation history</div>
<div id="t75" class="t" style="left:924.00px;top:660.69px;font-size:13.19px;color:#5b8cb0;transform:scaleX(0.9590);transform-origin:0 0;">Agreement history</div>
<div id="t76" class="t" style="left:1057.68px;top:660.69px;font-size:13.19px;color:#5b8cb0;transform:scaleX(0.9242);transform-origin:0 0;">Refresh</div>
<div id="t77" class="t" style="left:145.60px;top:694.15px;font-size:10.29px;color:#6a6a6a;transform:scaleX(1.0110);transform-origin:0 0;">Property</div>
<div id="t78" class="t" style="left:293.50px;top:694.15px;font-size:10.29px;color:#6a6a6a;transform:scaleX(1.0323);transform-origin:0 0;">Property name</div>
<div id="t79" class="t" style="left:492.40px;top:694.15px;font-size:10.29px;color:#6a6a6a;transform:scaleX(0.9588);transform-origin:0 0;">Block</div>
<div id="t80" class="t" style="left:640.20px;top:694.15px;font-size:10.29px;color:#6a6a6a;transform:scaleX(0.9929);transform-origin:0 0;">Floor</div>
<div id="t81" class="t" style="left:787.80px;top:694.15px;font-size:10.29px;color:#6a6a6a;transform:scaleX(1.0433);transform-origin:0 0;">Unit</div>
<div id="t82" class="t" style="left:935.70px;top:694.15px;font-size:10.29px;color:#6a6a6a;transform:scaleX(1.0345);transform-origin:0 0;">Unit name</div>
<div id="t83" class="t" style="left:1134.10px;top:694.15px;font-size:10.29px;color:#6a6a6a;transform:scaleX(1.0730);transform-origin:0 0;">Unit type ID</div>
<div id="t84" class="t" style="left:1281.90px;top:694.15px;font-size:10.29px;color:#6a6a6a;transform:scaleX(1.0457);transform-origin:0 0;">Furnishing type</div>
<div id="t85" class="t" style="left:1430.00px;top:694.15px;font-size:10.29px;color:#6a6a6a;transform:scaleX(0.9880);transform-origin:0 0;">Currency</div>
<div id="t86" class="t" style="left:1525.40px;top:694.15px;font-size:10.29px;color:#6a6a6a;transform:scaleX(0.9490);transform-origin:0 0;">City</div>
<div id="t87" class="t" style="left:145.67px;top:719.02px;font-size:13.62px;color:#3d6e94;transform:scaleX(0.9349);transform-origin:0 0;">Prop-06</div>
<div id="t88" class="t" style="left:293.82px;top:719.02px;font-size:13.62px;color:#222;transform:scaleX(0.8843);transform-origin:0 0;">EA complex</div>
<div id="t89" class="t" style="left:493.17px;top:719.02px;font-size:13.62px;color:#222;transform:scaleX(0.8262);transform-origin:0 0;">EA-B1</div>
<div id="t90" class="t" style="left:640.32px;top:719.02px;font-size:13.62px;color:#222;transform:scaleX(0.7836);transform-origin:0 0;">F0</div>
<div id="t91" class="t" style="left:789.00px;top:719.02px;font-size:13.62px;color:#3d6e94;transform:scaleX(0.8903);transform-origin:0 0;">704</div>
<div id="t92" class="t" style="left:936.80px;top:719.02px;font-size:13.62px;color:#222;transform:scaleX(0.8903);transform-origin:0 0;">704</div>
<div id="t93" class="t" style="left:1135.60px;top:719.02px;font-size:13.62px;color:#222;transform:scaleX(0.8400);transform-origin:0 0;">3BHK</div>
<div id="t94" class="t" style="left:1282.67px;top:719.02px;font-size:13.62px;color:#222;transform:scaleX(0.9260);transform-origin:0 0;">Unfurnished</div>
<div id="t95" class="t" style="left:1430.05px;top:719.02px;font-size:13.62px;color:#3d6e94;transform:scaleX(0.8529);transform-origin:0 0;">USD</div>
<div id="t96" class="t" style="left:1526.60px;top:719.02px;font-size:13.62px;color:#222;transform:scaleX(0.8978);transform-origin:0 0;">Oakland</div>
<div id="t97" class="t" style="left:145.67px;top:746.97px;font-size:13.62px;color:#222;transform:scaleX(0.9349);transform-origin:0 0;">Prop-06</div>
<div id="t98" class="t" style="left:293.82px;top:746.97px;font-size:13.62px;color:#222;transform:scaleX(0.8843);transform-origin:0 0;">EA complex</div>
<div id="t99" class="t" style="left:493.17px;top:746.97px;font-size:13.62px;color:#222;transform:scaleX(0.8262);transform-origin:0 0;">EA-B1</div>
<div id="t100" class="t" style="left:640.32px;top:746.97px;font-size:13.62px;color:#222;transform:scaleX(0.7836);transform-origin:0 0;">F0</div>
<div id="t101" class="t" style="left:788.07px;top:746.97px;font-size:13.62px;color:#222;transform:scaleX(0.9344);transform-origin:0 0;">Unit-501</div>
<div id="t102" class="t" style="left:935.87px;top:746.97px;font-size:13.62px;color:#222;transform:scaleX(0.9304);transform-origin:0 0;">Unit-501</div>
<div id="t103" class="t" style="left:1135.60px;top:746.97px;font-size:13.62px;color:#222;transform:scaleX(0.8400);transform-origin:0 0;">3BHK</div>
<div id="t104" class="t" style="left:1282.71px;top:746.97px;font-size:13.62px;color:#222;transform:scaleX(0.8872);transform-origin:0 0;">Furnished</div>
<div id="t105" class="t" style="left:1430.05px;top:746.97px;font-size:13.62px;color:#222;transform:scaleX(0.8529);transform-origin:0 0;">USD</div>
<div id="t106" class="t" style="left:1526.60px;top:746.97px;font-size:13.62px;color:#222;transform:scaleX(0.8978);transform-origin:0 0;">Oakland</div>
<div id="t107" class="t" style="left:145.67px;top:774.92px;font-size:13.62px;color:#222;transform:scaleX(0.9349);transform-origin:0 0;">Prop-06</div>
<div id="t108" class="t" style="left:293.82px;top:774.92px;font-size:13.62px;color:#222;transform:scaleX(0.8843);transform-origin:0 0;">EA complex</div>
<div id="t109" class="t" style="left:493.17px;top:774.92px;font-size:13.62px;color:#222;transform:scaleX(0.8262);transform-origin:0 0;">EA-B1</div>
<div id="t110" class="t" style="left:640.32px;top:774.92px;font-size:13.62px;color:#222;transform:scaleX(0.7836);transform-origin:0 0;">F0</div>
<div id="t111" class="t" style="left:788.07px;top:774.92px;font-size:13.62px;color:#222;transform:scaleX(0.9344);transform-origin:0 0;">Unit-502</div>
<div id="t112" class="t" style="left:935.87px;top:774.92px;font-size:13.62px;color:#222;transform:scaleX(0.9304);transform-origin:0 0;">Unit-502</div>
<div id="t113" class="t" style="left:1135.60px;top:774.92px;font-size:13.62px;color:#222;transform:scaleX(0.8400);transform-origin:0 0;">3BHK</div>
<div id="t114" class="t" style="left:1282.67px;top:774.92px;font-size:13.62px;color:#222;transform:scaleX(0.9260);transform-origin:0 0;">Unfurnished</div>
<div id="t115" class="t" style="left:1430.05px;top:774.92px;font-size:13.62px;color:#222;transform:scaleX(0.8529);transform-origin:0 0;">USD</div>
<div id="t116" class="t" style="left:1526.60px;top:774.92px;font-size:13.62px;color:#222;transform:scaleX(0.8978);transform-origin:0 0;">Oakland</div>
<div id="t117" class="t" style="left:145.67px;top:802.87px;font-size:13.62px;color:#222;transform:scaleX(0.9349);transform-origin:0 0;">Prop-06</div>
<div id="t118" class="t" style="left:293.82px;top:802.87px;font-size:13.62px;color:#222;transform:scaleX(0.8843);transform-origin:0 0;">EA complex</div>
<div id="t119" class="t" style="left:493.17px;top:802.87px;font-size:13.62px;color:#222;transform:scaleX(0.8262);transform-origin:0 0;">EA-B1</div>
<div id="t120" class="t" style="left:640.32px;top:802.87px;font-size:13.62px;color:#222;transform:scaleX(0.7836);transform-origin:0 0;">F0</div>
<div id="t121" class="t" style="left:788.07px;top:802.87px;font-size:13.62px;color:#222;transform:scaleX(0.9344);transform-origin:0 0;">Unit-503</div>
<div id="t122" class="t" style="left:935.87px;top:802.87px;font-size:13.62px;color:#222;transform:scaleX(0.9304);transform-origin:0 0;">Unit-503</div>
<div id="t123" class="t" style="left:1135.60px;top:802.87px;font-size:13.62px;color:#222;transform:scaleX(0.8400);transform-origin:0 0;">3BHK</div>
<div id="t124" class="t" style="left:1282.67px;top:802.87px;font-size:13.62px;color:#222;transform:scaleX(0.9260);transform-origin:0 0;">Unfurnished</div>
<div id="t125" class="t" style="left:1430.05px;top:802.87px;font-size:13.62px;color:#222;transform:scaleX(0.8529);transform-origin:0 0;">USD</div>
<div id="t126" class="t" style="left:1526.60px;top:802.87px;font-size:13.62px;color:#222;transform:scaleX(0.8978);transform-origin:0 0;">Oakland</div>
<div id="t127" class="t" style="left:145.67px;top:830.82px;font-size:13.62px;color:#222;transform:scaleX(0.9349);transform-origin:0 0;">Prop-06</div>
<div id="t128" class="t" style="left:293.82px;top:830.82px;font-size:13.62px;color:#222;transform:scaleX(0.8843);transform-origin:0 0;">EA complex</div>
<div id="t129" class="t" style="left:493.17px;top:830.82px;font-size:13.62px;color:#222;transform:scaleX(0.8262);transform-origin:0 0;">EA-B1</div>
<div id="t130" class="t" style="left:640.32px;top:830.82px;font-size:13.62px;color:#222;transform:scaleX(0.7836);transform-origin:0 0;">F0</div>
<div id="t131" class="t" style="left:788.08px;top:830.82px;font-size:13.62px;color:#222;transform:scaleX(0.9160);transform-origin:0 0;">Unit-504</div>
<div id="t132" class="t" style="left:935.89px;top:830.82px;font-size:13.62px;color:#222;transform:scaleX(0.9121);transform-origin:0 0;">Unit-504</div>
<div id="t133" class="t" style="left:1135.60px;top:830.82px;font-size:13.62px;color:#222;transform:scaleX(0.8400);transform-origin:0 0;">3BHK</div>
<div id="t134" class="t" style="left:1282.67px;top:830.82px;font-size:13.62px;color:#222;transform:scaleX(0.9260);transform-origin:0 0;">Unfurnished</div>
<div id="t135" class="t" style="left:1430.05px;top:830.82px;font-size:13.62px;color:#222;transform:scaleX(0.8529);transform-origin:0 0;">USD</div>
<div id="t136" class="t" style="left:1526.60px;top:830.82px;font-size:13.62px;color:#222;transform:scaleX(0.8978);transform-origin:0 0;">Oakland</div>
<div id="t137" class="t" style="left:145.67px;top:858.77px;font-size:13.62px;color:#222;transform:scaleX(0.9349);transform-origin:0 0;">Prop-06</div>
<div id="t138" class="t" style="left:293.82px;top:858.77px;font-size:13.62px;color:#222;transform:scaleX(0.8843);transform-origin:0 0;">EA complex</div>
<div id="t139" class="t" style="left:493.17px;top:858.77px;font-size:13.62px;color:#222;transform:scaleX(0.8262);transform-origin:0 0;">EA-B1</div>
<div id="t140" class="t" style="left:640.32px;top:858.77px;font-size:13.62px;color:#222;transform:scaleX(0.7836);transform-origin:0 0;">F0</div>
<div id="t141" class="t" style="left:788.07px;top:858.77px;font-size:13.62px;color:#222;transform:scaleX(0.9344);transform-origin:0 0;">Unit-505</div>
<div id="t142" class="t" style="left:935.87px;top:858.77px;font-size:13.62px;color:#222;transform:scaleX(0.9304);transform-origin:0 0;">Unit-505</div>
<div id="t143" class="t" style="left:1135.60px;top:858.77px;font-size:13.62px;color:#222;transform:scaleX(0.8400);transform-origin:0 0;">3BHK</div>
<div id="t144" class="t" style="left:1282.67px;top:858.77px;font-size:13.62px;color:#222;transform:scaleX(0.9260);transform-origin:0 0;">Unfurnished</div>
<div id="t145" class="t" style="left:1430.05px;top:858.77px;font-size:13.62px;color:#222;transform:scaleX(0.8529);transform-origin:0 0;">USD</div>
<div id="t146" class="t" style="left:1526.60px;top:858.77px;font-size:13.62px;color:#222;transform:scaleX(0.8978);transform-origin:0 0;">Oakland</div>
<div id="t147" class="t" style="left:85.00px;top:904.68px;font-size:10.72px;color:#555;transform:scaleX(1.0115);transform-origin:0 0;">Unit occupancy status for the period :</div>
<div id="t148" class="t" style="left:299.80px;top:904.68px;font-size:10.72px;color:#555;transform:scaleX(0.9786);transform-origin:0 0;">Vacant</div>
<div id="t149" class="t" style="left:368.40px;top:904.68px;font-size:10.72px;color:#555;transform:scaleX(0.9278);transform-origin:0 0;">Reserved</div>
<div id="t150" class="t" style="left:447.50px;top:904.68px;font-size:10.72px;color:#555;transform:scaleX(0.9885);transform-origin:0 0;">Occupied</div>
</body></html>
